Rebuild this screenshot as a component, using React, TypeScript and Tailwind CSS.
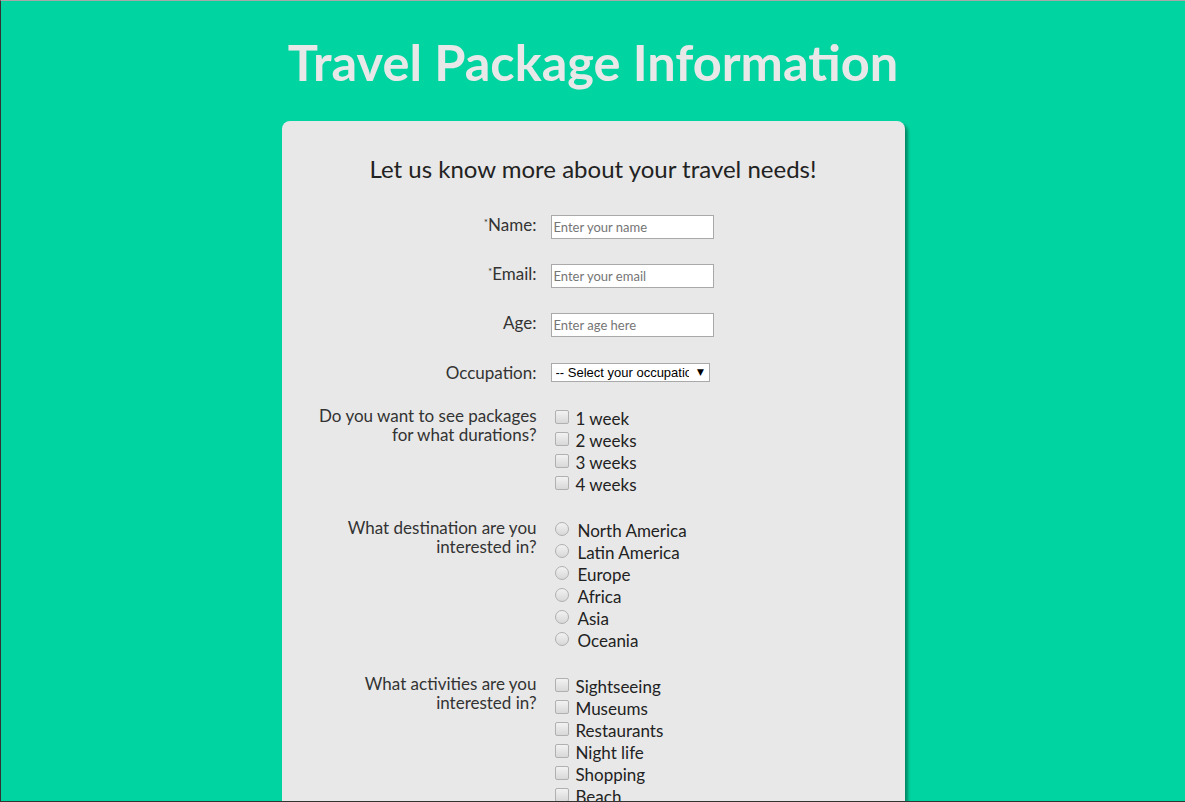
import type { ReactNode } from "react";

const durations = ["1 week", "2 weeks", "3 weeks", "4 weeks"];
const destinations = ["North America", "Latin America", "Europe", "Africa", "Asia", "Oceania"];
const activities = ["Sightseeing", "Museums", "Restaurants", "Night life", "Shopping", "Beach"];

const FONT = "font-['Lato','Noto_Sans',sans-serif]";

function Row({ label, children, className = "" }: { label: ReactNode; children: ReactNode; className?: string }) {
  return (
    <div className={`flex items-start ${className}`}>
      <div className="w-[255px] shrink-0 text-right text-[17px] leading-[19px] text-[#333]">{label}</div>
      <div className="ml-[14px]">{children}</div>
    </div>
  );
}

function Req({ text }: { text: string }) {
  return (
    <>
      <span className="relative -top-[5px] text-[10px] leading-none">*</span>
      {text}
    </>
  );
}

function TextInput({ placeholder }: { placeholder: string }) {
  return (
    <input
      type="text"
      placeholder={placeholder}
      className={`block h-[24px] w-[163px] border border-[#a9a9a9] bg-white px-[2px] text-[13px] text-[#333] placeholder:text-[#757575] ${FONT}`}
    />
  );
}

// old-chrome looking checkbox / radio
function Box({ round }: { round?: boolean }) {
  return (
    <span
      className={`mt-[2px] inline-block h-[14px] w-[14px] shrink-0 border border-[#b0b0b0] bg-gradient-to-b from-[#f2f2f2] to-[#d8d8d8] ${
        round ? "rounded-full" : "rounded-[2px]"
      }`}
      aria-hidden
    />
  );
}

function Choices({ items, round }: { items: string[]; round?: boolean }) {
  return (
    <ul className="pt-[2px]">
      {items.map((it) => (
        <li key={it} className="flex h-[22px] items-start pl-[4px] text-[17px] leading-[22px] text-[#222]">
          <Box round={round} />
          <span className={round ? "ml-[9px]" : "ml-[7px]"}>{it}</span>
        </li>
      ))}
    </ul>
  );
}

export default function App() {
  return (
    <div
      className={`h-[802px] overflow-hidden border-t border-l border-b border-t-[#a8a8a8] border-l-[#333] border-b-[#333] bg-[#00d4a0] ${FONT}`}
    >
      <h1 className="pt-[29px] text-center text-[50.5px] font-bold leading-[64px] text-[#e8e8e8]">
        Travel Package Information
      </h1>

      <div className="mx-auto mt-[27px] h-[720px] w-[623px] rounded-[8px] bg-[#e8e8e8] pt-[30px] shadow-[3px_3px_3px_rgba(0,80,60,0.55)]">
        <h2 className="text-center text-[24px] leading-[36px] text-[#222]">
          Let us know more about your travel needs!
        </h2>

        <form className="mt-[28px]">
          <Row label={<Req text="Name:" />} className="mb-[25px]">
            <TextInput placeholder="Enter your name" />
          </Row>
          <Row label={<Req text="Email:" />} className="mb-[25px]">
            <TextInput placeholder="Enter your email" />
          </Row>
          <Row label="Age:" className="mb-[26px]">
            <TextInput placeholder="Enter age here" />
          </Row>
          <Row label="Occupation:" className="mb-[24px]">
            <div className="relative">
              <select className="block h-[19px] w-[159px] appearance-none border border-[#a9a9a9] bg-white pl-[4px] pr-[20px] font-['Liberation_Sans',Arial,sans-serif] text-[13px] leading-[17px] text-black">
                <option>-- Select your occupation --</option>
              </select>
              <span className="pointer-events-none absolute right-[1px] top-[1px] h-[17px] w-[16px] bg-white text-center font-['DejaVu_Sans',sans-serif] text-[9px] leading-[17px] text-black">
                ▼
              </span>
            </div>
          </Row>
          <Row label={<>Do you want to see packages<br />for what durations?</>} className="mb-[22px]">
            <Choices items={durations} />
          </Row>
          <Row label={<>What destination are you<br />interested in?</>} className="mb-[22px]">
            <Choices items={destinations} round />
          </Row>
          <Row label={<>What activities are you<br />interested in?</>}>
            <Choices items={activities} />
          </Row>
        </form>
      </div>
    </div>
  );
}
